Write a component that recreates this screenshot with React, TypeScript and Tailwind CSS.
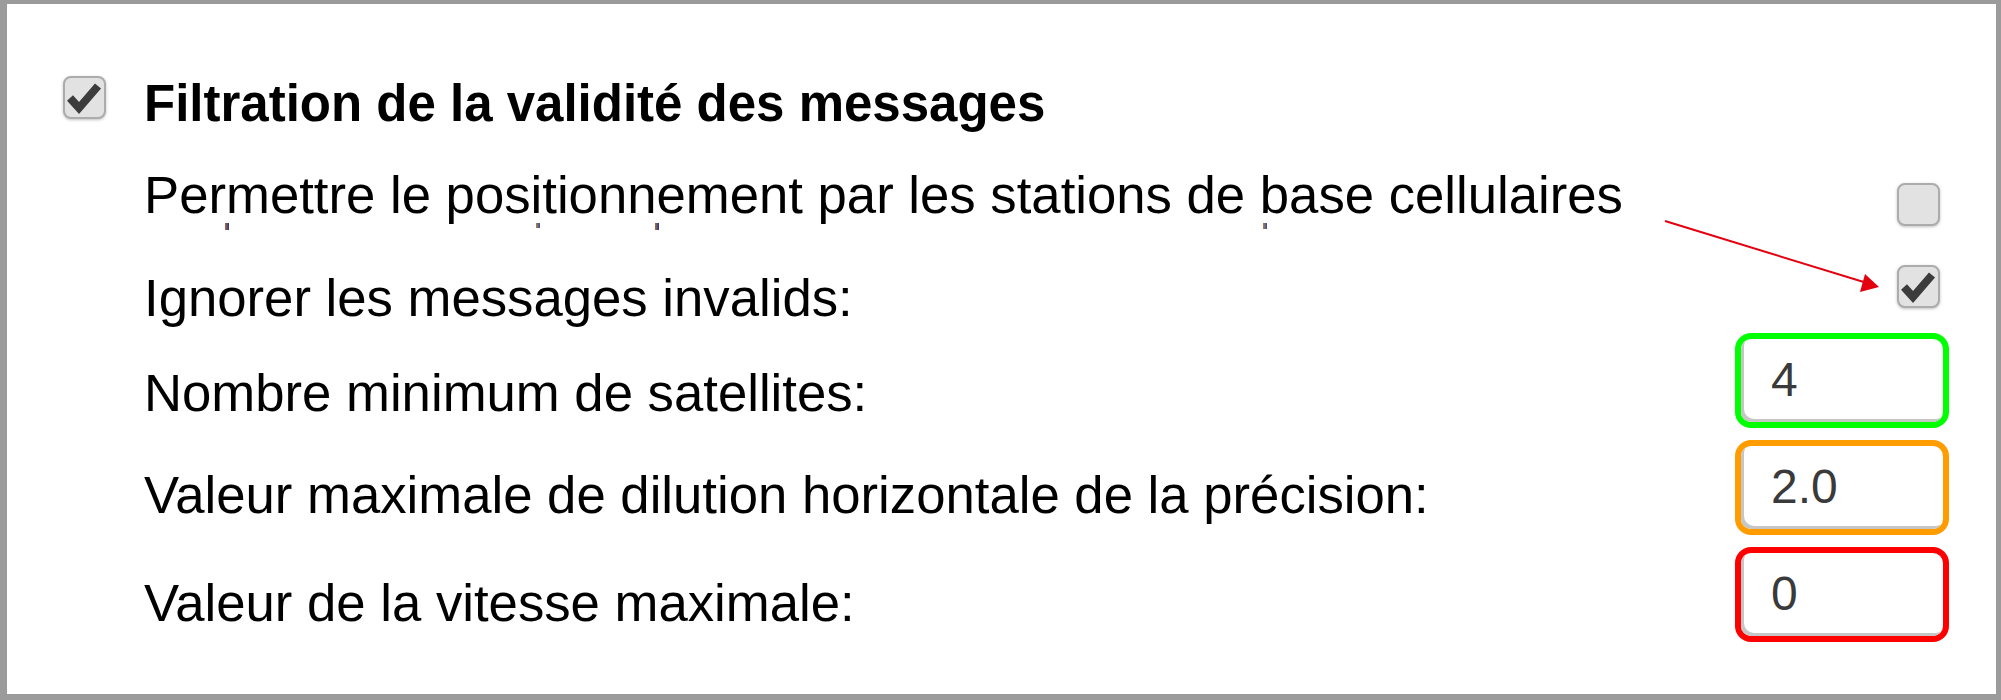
import React from "react"

type Field = {
  label: string
  value: string
  ring: string
}

const FIELDS: Field[] = [
  { label: "Nombre minimum de satellites:", value: "4", ring: "border-[#00ff00]" },
  { label: "Valeur maximale de dilution horizontale de la précision:", value: "2.0", ring: "border-[#ff9c00]" },
  { label: "Valeur de la vitesse maximale:", value: "0", ring: "border-[#ff0000]" },
]

// heights of the three input rows, the last one just fills the rest
const FIELD_ROW = ["h-[107px]", "h-[107px]", "h-auto"]
const FIELD_LABEL_TOP = ["mt-[34px]", "mt-[29px]", "mt-[30px]"]

function Checkbox({ checked = false, className = "" }: { checked?: boolean; className?: string }) {
  return (
    <div
      className={`relative h-[43px] w-[43px] shrink-0 rounded-[8px] border-2 border-[#acacac] bg-[#e2e2e2] shadow-[0_1px_3px_rgba(0,0,0,0.25)] ${className}`}
    >
      {checked && (
        <svg viewBox="0 0 43 43" className="absolute -left-[2px] -top-[2px] h-[43px] w-[43px]">
          <polyline
            points="7,22 16,32 35,10"
            fill="none"
            stroke="#3c3c3c"
            strokeWidth="8"
            strokeLinejoin="miter"
            strokeLinecap="butt"
          />
        </svg>
      )}
    </div>
  )
}

function NumberBox({ value, ring }: { value: string; ring: string }) {
  return (
    <div className={`h-[95px] w-[214px] rounded-[16px] border-[6px] ${ring} bg-white`}>
      <div className="h-full w-full rounded-[10px] pl-[30px] pt-[17px] shadow-[inset_3px_-3px_0_#c6c6c6]">
        <span className="block text-[48px] leading-[48px] text-[#3a3a3a]">{value}</span>
      </div>
    </div>
  )
}

export default function App() {
  return (
    <div className="relative h-[700px] w-[2001px] border-b-[6px] border-l-[7px] border-r-[5px] border-t-4 border-[#9b9b9b] bg-white font-['Liberation_Sans',Arial,sans-serif] text-black">
      <div className="flex flex-col pl-[56px] pr-[47px] pt-[72px]">
        {/* Section header */}
        <div className="flex h-[93px] items-start gap-[38px]">
          <Checkbox checked />
          <h2 className="mt-[3px] text-[51px] font-bold leading-[50px]">Filtration de la validité des messages</h2>
        </div>

        {/* Cell tower positioning */}
        <div className="flex h-[96px] items-start justify-between pl-[81px]">
          <span className="text-[52.7px] leading-[52px]">Permettre le positionnement par les stations de base cellulaires</span>
          <Checkbox className="mr-[9px] mt-[14px]" />
        </div>

        {/* Ignore invalid */}
        <div className="flex h-[68px] items-start justify-between pl-[81px]">
          <span className="mt-[7px] text-[52.7px] leading-[52px]">Ignorer les messages invalids:</span>
          <Checkbox checked className="mr-[9px]" />
        </div>

        {FIELDS.map((f, i) => (
          <div key={f.label} className={`flex items-start justify-between pl-[81px] ${FIELD_ROW[i]}`}>
            <span className={`text-[52.7px] leading-[52px] ${FIELD_LABEL_TOP[i]}`}>{f.label}</span>
            <NumberBox value={f.value} ring={f.ring} />
          </div>
        ))}
      </div>

      {/* annotation arrow */}
      <svg className="pointer-events-none absolute left-[1644px] top-[205px]" width="240" height="95" viewBox="1644 205 240 95">
        <line x1="1658" y1="217" x2="1860" y2="279" stroke="#e3000f" strokeWidth="2" />
        <polygon points="1872,283 1858,270 1853,288" fill="#e3000f" />
      </svg>

      {/* rendering specks under the first label */}
      <span className="absolute left-[218px] top-[219px] h-[7px] w-[4px] bg-gradient-to-r from-[#b8641e] to-[#1a2e8c]" />
      <span className="absolute left-[529px] top-[219px] h-[5px] w-[4px] bg-gradient-to-r from-[#c07a30] to-[#2a4aa0]" />
      <span className="absolute left-[648px] top-[219px] h-[7px] w-[4px] bg-gradient-to-r from-[#b8641e] to-[#1a2e8c]" />
      <span className="absolute left-[1256px] top-[219px] h-[6px] w-[4px] bg-gradient-to-r from-[#c07a30] to-[#2a4aa0]" />
    </div>
  )
}
